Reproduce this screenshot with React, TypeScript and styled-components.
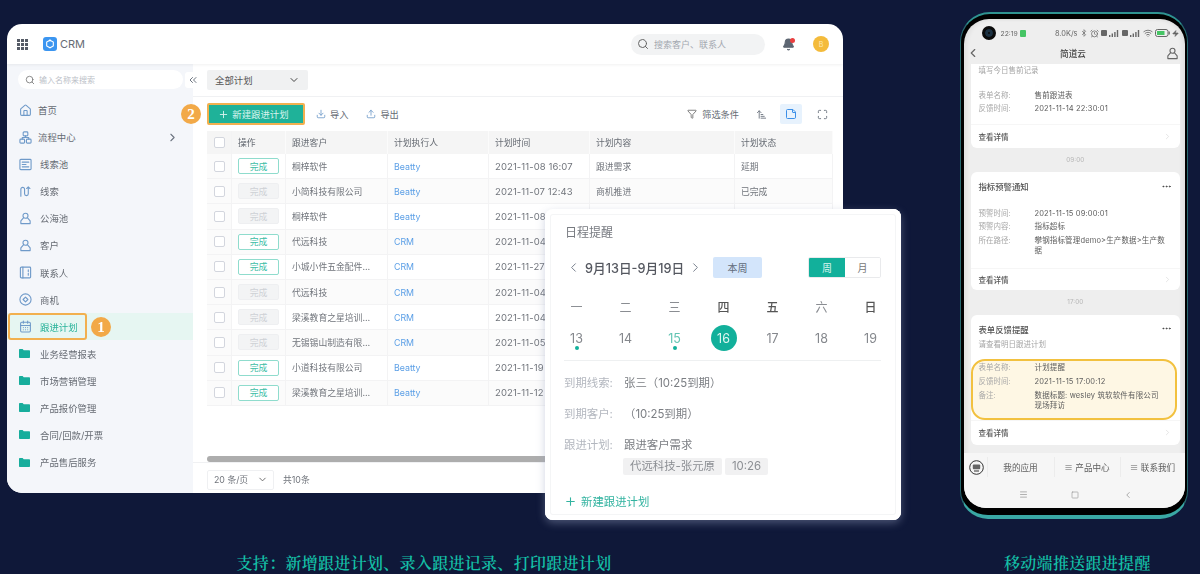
import React from 'react';
import styled, { createGlobalStyle } from 'styled-components';
import {
  House, CalendarDays,
  ChevronRight, ChevronLeft, ChevronDown, ChevronsLeft, Search, Plus, Download, Upload,
  Funnel, ArrowUpNarrowWide, StickyNote, Maximize, Bell, Bluetooth, AlarmClock, Wifi,
  Menu, Square, Ellipsis, Zap,
} from 'lucide-react';

const FONT = `"Inter", "Noto Sans CJK SC", sans-serif`;

const Global = createGlobalStyle`
  html, body { margin: 0; padding: 0; background: #0f1839; }
  * { box-sizing: border-box; }
  #root { font-family: ${FONT}; }
`;

const Stage = styled.div`
  position: relative;
  width: 1200px;
  height: 574px;
  background: #0f1839;
  overflow: hidden;
`;
const TopRow = styled.div`
  display: flex;
  align-items: flex-start;
  justify-content: space-between;
  padding: 12px 12px 0 7px;
  height: 519px;
`;
const Captions = styled.div`
  display: grid;
  grid-template-columns: 848px 1fr;
  margin-top: 33px;
`;
const Caption = styled.div<{ $pad?: number }>`
  color: #14bfa6;
  font: 600 16px/22px "Noto Serif CJK SC", "Noto Sans CJK SC", serif;
  letter-spacing: 0.3px;
  text-align: ${p => (p.$pad ? 'left' : 'center')};
  padding-left: ${p => p.$pad || 0}px;
`;

/* CRM window */
const Crm = styled.div`
  width: 836px;
  height: 469px;
  margin-top: 12px;
  border-radius: 15px;
  background: #fff;
  overflow: hidden;
  display: flex;
  flex-direction: column;
  filter: blur(0.5px);
`;
const Header = styled.header`
  height: 40px;
  flex: none;
  display: flex;
  align-items: center;
  padding: 0 14px 0 10px;
  box-shadow: 0 1px 3px rgba(0,0,0,.06);
  position: relative;
  z-index: 1;
`;
const Logo = styled.span`
  width: 14px;
  height: 14px;
  margin-left: 15px;
  border-radius: 3px;
  background: #3b95f0;
  display: flex;
  align-items: center;
  justify-content: center;
`;
const Brand = styled.span`
  margin-left: 3px;
  font-size: 11px;
  color: #666c75;
`;
const GlobalSearch = styled.div`
  margin-left: auto;
  width: 134px;
  height: 21px;
  border-radius: 11px;
  background: #f2f3f4;
  display: flex;
  align-items: center;
  gap: 5px;
  padding-left: 6px;
  font-size: 9px;
  color: #a3a8b0;
`;
const BellWrap = styled.span`
  position: relative;
  display: flex;
  margin-left: 17px;
  color: #5d6672;
`;
const BellDot = styled.i`
  position: absolute;
  top: 0;
  right: 0;
  width: 5px;
  height: 5px;
  border-radius: 50%;
  background: #ea3f3f;
`;
const Avatar = styled.span`
  width: 16px;
  height: 16px;
  margin-left: 18px;
  border-radius: 50%;
  background: #f4bb3b;
  color: #ffe9b0;
  font-size: 7px;
  display: flex;
  align-items: center;
  justify-content: center;
`;
const Body = styled.div`
  flex: 1;
  display: flex;
  min-height: 0;
`;
const Side = styled.aside`
  width: 186px;
  flex: none;
  background: #f4f6fa;
  padding-top: 6px;
  position: relative;
`;
const SideSearch = styled.div`
  width: 165px;
  height: 19px;
  margin-left: 11px;
  margin-bottom: 7.5px;
  border-radius: 10px;
  background: #fff;
  display: flex;
  align-items: center;
  gap: 4px;
  padding-left: 7px;
  font-size: 8px;
  color: #bcc1c8;
`;
const Collapse = styled.span`
  position: absolute;
  top: 8px;
  right: -8px;
  width: 16px;
  height: 16px;
  background: #fff;
  border-radius: 3px;
  color: #6d7580;
  display: flex;
  align-items: center;
  justify-content: center;
  z-index: 2;
`;
const MenuItem = styled.div<{ $active?: boolean; $gap?: number }>`
  position: relative;
  height: 27.08px;
  display: flex;
  align-items: center;
  padding-left: 12px;
  gap: ${p => p.$gap ?? 8}px;
  font-size: 9.4px;
  color: ${p => (p.$active ? '#2ab39a' : '#666b73')};
  background: ${p => (p.$active ? '#e6f6f2' : 'transparent')};
  svg { flex: none; }
`;
const SideIcon = styled.svg<{ $tone?: string }>`
  width: 13px;
  height: 13px;
  fill: none;
  stroke: ${p => p.$tone || '#6f9ac9'};
  stroke-width: 1.2;
  stroke-linejoin: round;
  stroke-linecap: round;
`;
const MenuArrow = styled.span`
  margin-left: auto;
  margin-right: 14px;
  display: flex;
  color: #6d7580;
`;
const ActiveBox = styled.span`
  position: absolute;
  left: 1px;
  top: 0;
  width: 79px;
  height: 27px;
  border: 2px solid #f2b04f;
  border-radius: 3px;
`;
const Step = styled.span`
  position: absolute;
  width: 20px;
  height: 20px;
  border-radius: 50%;
  background: #f2a948;
  color: #fff;
  font: 700 15px/20px "Liberation Serif", serif;
  text-align: center;
`;
const StepOne = styled(Step)`
  left: 84px;
  top: 4px;
`;
const StepTwo = styled(Step)`
  left: -26px;
  top: 1px;
`;
const Main = styled.main`
  flex: 1;
  min-width: 0;
  display: flex;
  flex-direction: column;
  background: #fff;
`;
const FilterBar = styled.div`
  height: 33px;
  flex: none;
  padding: 6px 0 0 14px;
  border-bottom: 1px solid #f0f1f3;
`;
const PlanSelect = styled.div`
  width: 101px;
  height: 20px;
  border-radius: 2px;
  background: #f0f1f2;
  display: flex;
  align-items: center;
  justify-content: space-between;
  padding: 0 8px;
  font-size: 9.4px;
  color: #555;
`;
const Toolbar = styled.div`
  height: 34px;
  flex: none;
  display: flex;
  align-items: center;
  padding: 0 15px 0 14px;
  font-size: 9.2px;
  color: #666b73;
  white-space: nowrap;
`;
const NewBtnWrap = styled.div`
  position: relative;
`;
const NewBtn = styled.div`
  width: 98px;
  height: 22px;
  padding-right: 5px;
  border: 2px solid #f2b04f;
  border-radius: 2px;
  background: #1fb299;
  color: #d8f3ee;
  font-size: 9.4px;
  display: flex;
  align-items: center;
  justify-content: center;
  gap: 3px;
`;
const ToolAction = styled.span<{ $ml: number }>`
  margin-left: ${p => p.$ml}px;
  display: flex;
  align-items: center;
  gap: 4px;
  svg { color: #6f9ac9; }
`;
const FilterAction = styled(ToolAction)`
  margin-left: auto;
  gap: 5px;
  svg { color: #666; }
`;
const ToolIcon = styled.span<{ $ml: number; $active?: boolean }>`
  margin-left: ${p => p.$ml}px;
  width: ${p => (p.$active ? 22 : 11)}px;
  height: ${p => (p.$active ? 20 : 12)}px;
  display: flex;
  align-items: center;
  justify-content: center;
  border-radius: 2px;
  background: ${p => (p.$active ? '#e7f2fd' : 'transparent')};
  color: ${p => (p.$active ? '#3b8fe8' : '#6d7580')};
`;
const Table = styled.div`
  margin: 0 10px 0 14px;
  flex: none;
  height: 331px;
  position: relative;
`;
const COLS = '25px 54px 102px 101px 101px 145px 98px';
const HeadRow = styled.div`
  display: grid;
  grid-template-columns: ${COLS};
  height: 23px;
  background: #f5f5f5;
  font-size: 8.8px;
  color: #666b73;
`;
const HeadCell = styled.div`
  display: flex;
  align-items: center;
  padding-left: 6px;
  border-right: 1px solid #fbfbfb;
`;
const Row = styled.div<{ $even: boolean }>`
  display: grid;
  grid-template-columns: ${COLS};
  height: 25.2px;
  background: ${p => (p.$even ? '#fbfbfb' : '#fff')};
  border-bottom: 1px solid #f3f3f4;
  font-size: 8.8px;
  color: #70747b;
`;
const Cell = styled.div<{ $link?: boolean; $fixed?: boolean }>`
  display: flex;
  align-items: center;
  padding-left: 6px;
  white-space: nowrap;
  overflow: hidden;
  border-right: 1px solid #f3f3f4;
  color: ${p => (p.$link ? '#5b9fe6' : 'inherit')};
  background: ${p => (p.$fixed ? '#fbfbfb' : 'transparent')};
`;
const TimeCell = styled(Cell)`
  font-size: 9.5px;
  letter-spacing: 0.1px;
`;
const CheckCell = styled(Cell)`
  justify-content: center;
  padding-left: 0;
`;
const Check = styled.span`
  width: 11px;
  height: 11px;
  background: #fff;
  border: 1px solid #d3d6de;
  border-radius: 2px;
`;
const Done = styled.span<{ $on: boolean }>`
  width: 41px;
  height: 16px;
  border-radius: 2px;
  display: flex;
  align-items: center;
  justify-content: center;
  font-size: 8.8px;
  border: 1px solid ${p => (p.$on ? '#8fdccd' : '#eeeff1')};
  background: ${p => (p.$on ? '#fff' : '#f3f4f5')};
  color: ${p => (p.$on ? '#3dbda6' : '#ced1d6')};
`;
const ScrollBar = styled.div`
  position: absolute;
  left: 0;
  right: -4px;
  bottom: 0;
  height: 6px;
  border-radius: 3px;
  background: #adadad;
`;
const Pager = styled.div`
  flex: 1;
  display: flex;
  align-items: center;
  padding: 3px 0 0 14px;
  border-top: 1px solid #f0f1f3;
  font-size: 8.8px;
  color: #70747b;
`;
const PageSize = styled.div`
  width: 67px;
  height: 20px;
  margin-right: 9px;
  border: 1px solid #eff0f2;
  border-radius: 2px;
  display: flex;
  align-items: center;
  justify-content: space-between;
  padding: 0 5px 0 6px;
`;

/* Schedule popup */
const Popup = styled.section`
  position: absolute;
  left: 545px;
  top: 209px;
  width: 356px;
  height: 311px;
  padding: 15px 20px 0 19px;
  border-radius: 8px;
  background: #fff;
  box-shadow: 0 3px 8px rgba(150,160,190,.45), inset 0 0 0 5px #fff, inset 0 0 0 6px #f4f5f6;
  color: #6d7075;
  filter: blur(0.35px);
`;
const PopupTitle = styled.h3`
  margin: 0;
  padding-left: 1px;
  font-weight: 400;
  font-size: 12px;
  line-height: 18px;
  color: #777a80;
`;
const WeekBar = styled.div`
  display: flex;
  align-items: center;
  height: 21px;
  margin-top: 15px;
  padding-left: 2px;
  color: #6f7785;
`;
const Range = styled.span`
  font-size: 12.7px;
  font-weight: 500;
  color: #555860;
  margin: 0 4px;
  white-space: nowrap;
`;
const ThisWeek = styled.span`
  width: 49px;
  height: 21px;
  margin-left: 10px;
  border-radius: 2px;
  background: #d3e5fb;
  color: #5f6a78;
  font-size: 10px;
  display: flex;
  align-items: center;
  justify-content: center;
`;
const Segment = styled.div`
  margin-left: auto;
  width: 73px;
  height: 21px;
  display: grid;
  grid-template-columns: 36px 1fr;
  border-radius: 2px;
  border: 1px solid #e9eaec;
  overflow: hidden;
  font-size: 10px;
`;
const SegItem = styled.span<{ $on?: boolean }>`
  display: flex;
  align-items: center;
  justify-content: center;
  background: ${p => (p.$on ? '#12b09b' : '#fff')};
  color: ${p => (p.$on ? '#d9f5ef' : '#777')};
`;
const Days = styled.div`
  display: grid;
  grid-template-columns: repeat(7, 49px);
  margin: 21px 0 0 -12px;
  text-align: center;
`;
const WeekDay = styled.span<{ $strong?: boolean }>`
  font-size: 12px;
  line-height: 18px;
  font-weight: ${p => (p.$strong ? 500 : 400)};
  color: ${p => (p.$strong ? '#555' : '#8a8d92')};
`;
const DayCell = styled.span`
  height: 34px;
  margin-top: 6px;
  padding-top: 2px;
  display: flex;
  flex-direction: column;
  align-items: center;
  position: relative;
`;
const DayNum = styled.span<{ $tone?: string }>`
  width: 26px;
  height: 26px;
  border-radius: 50%;
  display: flex;
  align-items: center;
  justify-content: center;
  font-size: 12.5px;
  background: ${p => (p.$tone === 'today' ? '#12b09b' : 'transparent')};
  color: ${p => (p.$tone === 'today' ? '#dff6f1' : p.$tone === 'mark' ? '#63c4b3' : '#85888d')};
`;
const DayDot = styled.i`
  position: absolute;
  top: 23px;
  width: 4px;
  height: 4px;
  border-radius: 50%;
  background: #12b09b;
`;
const Divider = styled.div`
  height: 1px;
  margin-top: 3px;
  background: #eef0f1;
`;
const InfoRow = styled.div<{ $mt: number }>`
  display: flex;
  margin-top: ${p => p.$mt}px;
  font-size: 11.4px;
  line-height: 16px;
  color: #7b7e83;
`;
const InfoLabel = styled.span`
  width: 60px;
  flex: none;
  color: #b3b7bf;
`;
const Tags = styled.div`
  display: flex;
  gap: 3px;
  margin: 5px 0 0 59px;
`;
const Tag = styled.span`
  height: 17px;
  padding: 0 7px;
  border-radius: 2px;
  background: #f1f1f2;
  color: #8b8e93;
  font-size: 11.4px;
  line-height: 17px;
  white-space: nowrap;
`;
const PopupAdd = styled.div`
  display: flex;
  align-items: center;
  gap: 4px;
  margin-top: 18px;
  font-size: 11.4px;
  color: #32b3a0;
`;

/* Phone */
const Phone = styled.div`
  width: 228px;
  height: 507px;
  border-radius: 30px 30px 28px 28px;
  border: 2px solid #2f9391;
  border-left: 1.5px solid #27686f;
  border-right: 1.5px solid #27686f;
  border-bottom: 4px solid #3aa8a4;
  background: #000;
  padding: 5px 2.5px 7px;
  filter: blur(0.55px);
`;
const Screen = styled.div`
  height: 100%;
  border-radius: 25px 25px 22px 22px;
  background: #eeeeee;
  box-shadow: inset 3px 0 4px rgba(0,0,0,.06), inset -3px 0 4px rgba(0,0,0,.06);
  overflow: hidden;
  display: flex;
  flex-direction: column;
  font-size: 7.5px;
  color: #6a6a6a;
`;
const StatusBar = styled.div`
  height: 23px;
  flex: none;
  display: flex;
  align-items: center;
  padding: 5px 6px 0 18px;
  gap: 2px;
  font-size: 6.8px;
  color: #666;
`;
const Camera = styled.i`
  width: 14px;
  height: 14px;
  border-radius: 50%;
  background: #0b0b0b;
  border: 3px solid #0b0b0b;
  box-shadow: inset 0 0 0 3px #1c3142;
  margin-right: 3px;
`;
const GreenChip = styled.i`
  width: 6px;
  height: 7px;
  border-radius: 1px;
  background: #45c464;
`;
const Net = styled.span`
  margin-left: auto;
  font-size: 7.4px;
`;
const SimIcon = styled.svg`
  flex: none;
`;
const NavBar = styled.div`
  height: 22px;
  flex: none;
  display: flex;
  align-items: center;
  justify-content: space-between;
  padding: 0 5px 0 2px;
  color: #666;
`;
const NavTitle = styled.span`
  font-size: 8.6px;
  font-weight: 500;
  color: #444;
`;
const Feed = styled.div`
  flex: none;
  padding: 0 4.5px 0 7px;
`;
const Card = styled.div<{ $flat?: boolean }>`
  background: #fff;
  border-radius: ${p => (p.$flat ? '0 0 6px 6px' : '6px')};
`;
const CardTitle = styled.div`
  height: 28px;
  display: flex;
  align-items: center;
  justify-content: space-between;
  padding: 0 8px;
  font-size: 8.4px;
  color: #555;
  font-weight: 500;
`;
const Note = styled.div<{ $mt?: number }>`
  padding: 0 8px;
  margin-top: ${p => p.$mt ?? 0}px;
  line-height: 14px;
  color: #a5a5a5;
`;
const Kv = styled.div<{ $pt: number; $pb: number }>`
  padding: ${p => p.$pt}px 8px ${p => p.$pb}px;
`;
const MarkedKv = styled.div`
  margin: 7px 3px 0 0;
  padding: 1px 2px 6px 6px;
  background: #fef7e4;
  border: 2px solid #f2c13f;
  border-radius: 14px;
`;
const KvRow = styled.div`
  display: grid;
  grid-template-columns: 56px 131px;
  min-height: 13.6px;
  line-height: 10.5px;
  padding-top: 1.5px;
  color: #5d5d5d;
`;
const KvKey = styled.span`
  color: #a8a8a8;
`;
const KvVal = styled.span`
  letter-spacing: 0.15px;
`;
const CardFoot = styled.div<{ $h: number }>`
  height: ${p => p.$h}px;
  display: flex;
  align-items: center;
  justify-content: space-between;
  padding: 0 8px;
  border-top: 1px solid #f6f6f6;
  color: #555;
  font-weight: 500;
  svg { color: #ddd; }
`;
const TimeMark = styled.div<{ $h: number }>`
  height: ${p => p.$h}px;
  display: flex;
  align-items: center;
  justify-content: center;
  font-size: 6.4px;
  color: #b5b5b5;
`;
const Dock = styled.div`
  height: 29px;
  margin-top: 8px;
  flex: none;
  display: grid;
  grid-template-columns: 23px 67px 66px 1fr;
  align-items: center;
  background: #f6f6f6;
  font-size: 8.6px;
  color: #5e5e5e;
`;
const DockRobot = styled.span`
  display: flex;
  justify-content: center;
  padding-left: 2px;
`;
const DockItem = styled.span`
  height: 20px;
  display: flex;
  align-items: center;
  justify-content: center;
  border-left: 1px solid #ececec;
  white-space: nowrap;
`;
const SoftKeys = styled.div`
  flex: 1;
  display: flex;
  align-items: center;
  justify-content: space-between;
  padding: 0 52px 0 55px;
  background: #f6f6f6;
  color: #9a9a9a;
`;

const person = (
  <>
    <circle cx="7" cy="4" r="2.7" />
    <path d="M4.8 6.4 2 9.5v3h10v-3L9.2 6.4" />
  </>
);
const ICONS: Record<string, React.ReactNode> = {
  流程中心: (
    <>
      <rect x="4.5" y="1" width="5" height="4.2" rx="1" />
      <rect x="1" y="8.8" width="5" height="4.2" rx="1" />
      <rect x="8" y="8.8" width="5" height="4.2" rx="1" />
      <path d="M7 5.2V7M3.5 8.8V7h7v1.8" />
    </>
  ),
  线索池: (
    <>
      <rect x="1" y="1.5" width="12" height="11" rx="1" />
      <path d="M3.5 4.5h7M3.5 7h4M3.5 9.5h7" />
    </>
  ),
  线索: <path d="M2 12V4.5a2 2 0 0 1 4 0v5a2 2 0 0 0 4 0V2M8.2 3.8 10 2l1.8 1.8" />,
  公海池: person,
  客户: person,
  联系人: (
    <>
      <rect x="1.5" y="1.2" width="11" height="11.6" rx="1" />
      <path d="M4.2 1.2v11.6M10 4v2M10 8v2" />
    </>
  ),
  商机: (
    <>
      <circle cx="7" cy="7" r="6" />
      <path d="M7 4.4 9.6 7 7 9.6 4.4 7z" />
    </>
  ),
};
const MENU = ['流程中心', '线索池', '线索', '公海池', '客户', '联系人', '商机'];
const FOLDERS = ['业务经营报表', '市场营销管理', '产品报价管理', '合同/回款/开票', '产品售后服务'];

const ROWS: [boolean, string, string, string, string, string][] = [
  [true, '桐梓软件', 'Beatty', '2021-11-08 16:07', '跟进需求', '延期'],
  [false, '小简科技有限公司', 'Beatty', '2021-11-07 12:43', '商机推进', '已完成'],
  [false, '桐梓软件', 'Beatty', '2021-11-08', '', ''],
  [true, '代远科技', 'CRM', '2021-11-04', '', ''],
  [true, '小城小件五金配件…', 'CRM', '2021-11-27', '', ''],
  [false, '代远科技', 'CRM', '2021-11-04', '', ''],
  [false, '梁溪教育之星培训…', 'CRM', '2021-11-04', '', ''],
  [false, '无锡锡山制造有限…', 'CRM', '2021-11-05', '', ''],
  [true, '小道科技有限公司', 'Beatty', '2021-11-19', '', ''],
  [true, '梁溪教育之星培训…', 'Beatty', '2021-11-12', '', ''],
];
const HEADS = ['操作', '跟进客户', '计划执行人', '计划时间', '计划内容', '计划状态'];
const WEEK = ['一', '二', '三', '四', '五', '六', '日'];
const DATES = [13, 14, 15, 16, 17, 18, 19];

const AppsGrid = () => (
  <svg width="11" height="11" viewBox="0 0 11 11" fill="#555b66" aria-hidden>
    {[0, 4, 8].flatMap(y => [0, 4, 8].map(x => <rect key={`${x}-${y}`} x={x} y={y} width="3" height="3" />))}
  </svg>
);
const Folder = () => (
  <svg width="11" height="9" viewBox="0 0 11 9" aria-hidden>
    <path d="M0 1C0 .4.4 0 1 0h2.6l1.1 1.3H10c.6 0 1 .4 1 1V8c0 .6-.4 1-1 1H1C.4 9 0 8.6 0 8z" fill="#17ad9c" />
  </svg>
);
const Sim = () => (
  <SimIcon width="19" height="8" viewBox="0 0 19 8" aria-hidden>
    <rect x="0" y="1" width="6" height="6" rx="1" fill="#666" />
    <path d="M8 8V6h1.4v2zM10.6 8V4.5H12V8zM13.2 8V3h1.4v5zM15.8 8V1h1.4v7z" fill="#666" />
  </SimIcon>
);
const Robot = () => (
  <svg width="15" height="15" viewBox="0 0 15 15" fill="none" stroke="#333" aria-hidden>
    <circle cx="7.5" cy="7.5" r="6.8" />
    <rect x="3.8" y="4.6" width="7.4" height="4.6" rx="1" fill="#666" stroke="none" />
    <path d="M5 11h5" />
  </svg>
);

export default function App() {
  return (
    <>
      <Global />
      <Stage>
        <TopRow>
          <Crm>
            <Header>
              <AppsGrid />
              <Logo>
                <svg width="10" height="10" viewBox="0 0 10 10" aria-hidden>
                  <path d="M5 1.2 8.3 3v4L5 8.8 1.7 7V3z" fill="none" stroke="#fff" strokeWidth="1.1" />
                  <circle cx="5" cy="1.4" r=".9" fill="#fff" />
                </svg>
              </Logo>
              <Brand>CRM</Brand>
              <GlobalSearch>
                <Search size={12} color="#666" />
                搜索客户、联系人
              </GlobalSearch>
              <BellWrap>
                <Bell size={13} fill="#5d6672" />
                <BellDot />
              </BellWrap>
              <Avatar>B</Avatar>
            </Header>
            <Body>
              <Side>
                <SideSearch>
                  <Search size={10} color="#777" />
                  输入名称来搜索
                </SideSearch>
                <Collapse><ChevronsLeft size={12} /></Collapse>
                <MenuItem $gap={6}>
                  <House size={13} color="#6f9ac9" />
                  首页
                </MenuItem>
                {MENU.map((label, i) => (
                  <MenuItem key={label} $gap={i === 0 ? 6 : 8}>
                    <SideIcon viewBox="0 0 14 14">{ICONS[label]}</SideIcon>
                    {label}
                    {i === 0 && <MenuArrow><ChevronRight size={13} /></MenuArrow>}
                  </MenuItem>
                ))}
                <MenuItem $active>
                  <CalendarDays size={13} color="#6f9ac9" />
                  跟进计划
                  <ActiveBox />
                  <StepOne>1</StepOne>
                </MenuItem>
                {FOLDERS.map(label => (
                  <MenuItem key={label} $gap={10}>
                    <Folder />
                    {label}
                  </MenuItem>
                ))}
              </Side>
              <Main>
                <FilterBar>
                  <PlanSelect>全部计划<ChevronDown size={12} color="#444" /></PlanSelect>
                </FilterBar>
                <Toolbar>
                  <NewBtnWrap>
                    <StepTwo>2</StepTwo>
                    <NewBtn><Plus size={11} />新建跟进计划</NewBtn>
                  </NewBtnWrap>
                  <ToolAction $ml={11}><Download size={10} />导入</ToolAction>
                  <ToolAction $ml={18}><Upload size={10} />导出</ToolAction>
                  <FilterAction $ml={0}><Funnel size={10} />筛选条件</FilterAction>
                  <ToolIcon $ml={17}><ArrowUpNarrowWide size={11} /></ToolIcon>
                  <ToolIcon $ml={13} $active><StickyNote size={12} /></ToolIcon>
                  <ToolIcon $ml={15}><Maximize size={11} /></ToolIcon>
                </Toolbar>
                <Table>
                  <HeadRow>
                    <CheckCell><Check /></CheckCell>
                    {HEADS.map(h => <HeadCell key={h}>{h}</HeadCell>)}
                  </HeadRow>
                  {ROWS.map((r, i) => (
                    <Row key={i} $even={i % 2 === 1}>
                      <CheckCell $fixed><Check /></CheckCell>
                      <Cell><Done $on={r[0]}>完成</Done></Cell>
                      <Cell>{r[1]}</Cell>
                      <Cell $link>{r[2]}</Cell>
                      <TimeCell>{r[3]}</TimeCell>
                      <Cell>{r[4]}</Cell>
                      <Cell>{r[5]}</Cell>
                    </Row>
                  ))}
                  <ScrollBar />
                </Table>
                <Pager>
                  <PageSize>20 条/页<ChevronDown size={11} color="#666" /></PageSize>
                  共10条
                </Pager>
              </Main>
            </Body>
          </Crm>

          <Phone>
            <Screen>
              <StatusBar>
                <Camera />
                <span>22:19</span>
                <GreenChip />
                <Net>8.0K/s</Net>
                <Bluetooth size={8} />
                <AlarmClock size={9} />
                <Sim />
                <Sim />
                <Wifi size={10} />
                <svg width="15" height="8" viewBox="0 0 15 8" aria-hidden>
                  <rect x=".5" y=".5" width="12.5" height="7" rx="2" fill="none" stroke="#666" />
                  <rect x="2" y="2" width="7.5" height="4" fill="#45c464" />
                  <rect x="13.6" y="2.5" width="1.2" height="3" fill="#666" />
                </svg>
                <Zap size={7} fill="#666" />
              </StatusBar>
              <NavBar>
                <ChevronLeft size={14} />
                <NavTitle>简道云</NavTitle>
                <SideIcon $tone="#666" viewBox="0 0 14 14">{person}</SideIcon>
              </NavBar>
              <Feed>
                <Card $flat>
                  <Note>填写今日售前记录</Note>
                  <Kv $pt={11} $pb={8}>
                    <KvRow><KvKey>表单名称:</KvKey><KvVal>售前跟进表</KvVal></KvRow>
                    <KvRow><KvKey>反馈时间:</KvKey><KvVal>2021-11-14 22:30:01</KvVal></KvRow>
                  </Kv>
                  <CardFoot $h={24}>查看详情<ChevronRight size={9} /></CardFoot>
                </Card>
                <TimeMark $h={24}>09:00</TimeMark>
                <Card>
                  <CardTitle>指标预警通知<Ellipsis size={11} color="#444" /></CardTitle>
                  <Kv $pt={7} $pb={11}>
                    <KvRow><KvKey>预警时间:</KvKey><KvVal>2021-11-15 09:00:01</KvVal></KvRow>
                    <KvRow><KvKey>预警内容:</KvKey><KvVal>指标超标</KvVal></KvRow>
                    <KvRow><KvKey>所在路径:</KvKey><KvVal>攀钢指标管理demo&gt;生产数据&gt;生产数据</KvVal></KvRow>
                  </Kv>
                  <CardFoot $h={22}>查看详情<ChevronRight size={9} /></CardFoot>
                </Card>
                <TimeMark $h={25}>17:00</TimeMark>
                <Card>
                  <CardTitle>表单反馈提醒<Ellipsis size={11} color="#444" /></CardTitle>
                  <Note $mt={-5}>请查看明日跟进计划</Note>
                  <MarkedKv>
                    <KvRow><KvKey>表单名称:</KvKey><KvVal>计划提醒</KvVal></KvRow>
                    <KvRow><KvKey>反馈时间:</KvKey><KvVal>2021-11-15 17:00:12</KvVal></KvRow>
                    <KvRow><KvKey>备注:</KvKey><KvVal>数据标题: wesley 筑软软件有限公司 现场拜访</KvVal></KvRow>
                  </MarkedKv>
                  <CardFoot $h={25}>查看详情<ChevronRight size={9} /></CardFoot>
                </Card>
              </Feed>
              <Dock>
                <DockRobot><Robot /></DockRobot>
                <DockItem>我的应用</DockItem>
                <DockItem>≡ 产品中心</DockItem>
                <DockItem>≡ 联系我们</DockItem>
              </Dock>
              <SoftKeys>
                <Menu size={9} />
                <Square size={8} />
                <ChevronLeft size={10} />
              </SoftKeys>
            </Screen>
          </Phone>
        </TopRow>

        <Captions>
          <Caption>支持：新增跟进计划、录入跟进记录、打印跟进计划</Caption>
          <Caption $pad={156}>移动端推送跟进提醒</Caption>
        </Captions>

        <Popup>
          <PopupTitle>日程提醒</PopupTitle>
          <WeekBar>
            <ChevronLeft size={15} strokeWidth={1.5} />
            <Range>9月13日-9月19日</Range>
            <ChevronRight size={15} strokeWidth={1.5} />
            <ThisWeek>本周</ThisWeek>
            <Segment>
              <SegItem $on>周</SegItem>
              <SegItem>月</SegItem>
            </Segment>
          </WeekBar>
          <Days>
            {WEEK.map((w, i) => <WeekDay key={w} $strong={i === 3 || i === 4 || i === 6}>{w}</WeekDay>)}
            {DATES.map(d => (
              <DayCell key={d}>
                <DayNum $tone={d === 16 ? 'today' : d === 15 ? 'mark' : undefined}>{d}</DayNum>
                {(d === 13 || d === 15) && <DayDot />}
              </DayCell>
            ))}
          </Days>
          <Divider />
          <InfoRow $mt={14}><InfoLabel>到期线索:</InfoLabel>张三（10:25到期）</InfoRow>
          <InfoRow $mt={15}><InfoLabel>到期客户:</InfoLabel>（10:25到期）</InfoRow>
          <InfoRow $mt={15}><InfoLabel>跟进计划:</InfoLabel>跟进客户需求</InfoRow>
          <Tags>
            <Tag>代远科技-张元原</Tag>
            <Tag>10:26</Tag>
          </Tags>
          <PopupAdd><Plus size={13} />新建跟进计划</PopupAdd>
        </Popup>
      </Stage>
    </>
  );
}
